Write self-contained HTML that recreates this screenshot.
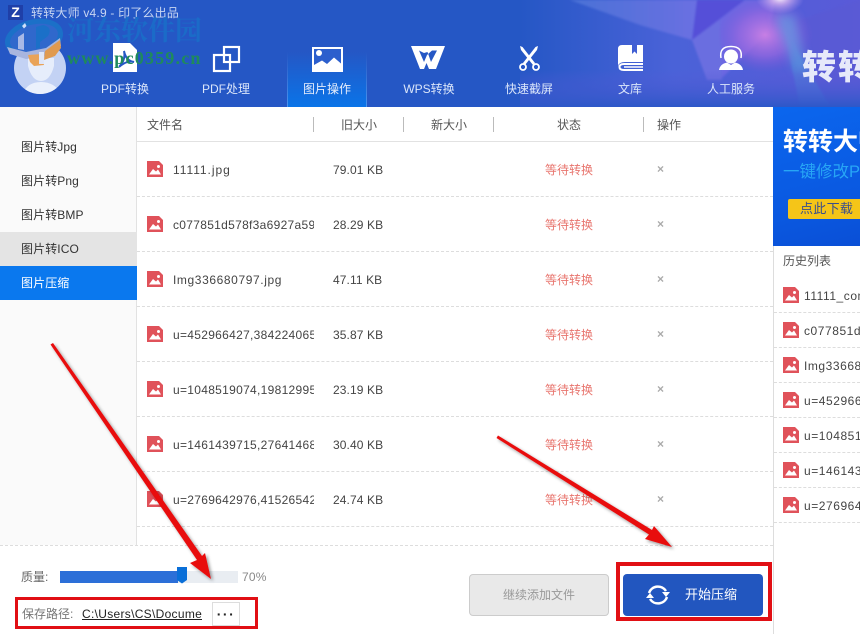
<!DOCTYPE html>
<html><head><meta charset="utf-8"><style>
*{box-sizing:border-box;margin:0;padding:0}
html,body{width:860px;height:634px;overflow:hidden;background:#fff}
body{position:relative;font-family:"Liberation Sans","Noto Sans CJK SC",sans-serif;font-size:12px;color:#444}
.a{position:absolute;white-space:nowrap}
.nav{position:absolute;top:81px;width:80px;text-align:center;color:#dbe6fa;font-size:12px;line-height:16px}
.side{position:absolute;left:21px;color:#333;line-height:16px;letter-spacing:.1px}
.hd{position:absolute;top:117px;color:#555;line-height:16px}
.sep{position:absolute;top:117px;width:1px;height:15px;background:#bbb}
.dash{position:absolute;left:137px;width:636px;border-top:1px dashed #ddd}
.nm{position:absolute;left:173px;width:141px;overflow:hidden;white-space:nowrap;color:#444;line-height:16px;letter-spacing:.3px}
.sz{position:absolute;left:333px;color:#444;line-height:16px;white-space:nowrap;letter-spacing:.1px}
.st{position:absolute;left:545px;color:#e8756e;line-height:16px;white-space:nowrap}
.x{position:absolute;left:657px;color:#aaa;font-size:12px;font-weight:bold;line-height:16px}
.ic{position:absolute;left:147px}
.hic{position:absolute;left:783px}
.hn{position:absolute;left:804px;color:#444;line-height:16px;white-space:nowrap;letter-spacing:.55px}
.hd2{position:absolute;left:774px;width:86px;border-top:1px dashed #ddd}
</style></head><body>
<svg width="0" height="0" style="position:absolute"><defs><symbol id="pic" viewBox="0 0 16 16"><path d="M0 0H12L16 4V16H0Z" fill="#e0525a"/><path d="M2 13.500L6 8L9 10.500L11 8.500L14 13.500Z" fill="#fff"/><circle cx="11.500" cy="5.500" r="1.500" fill="#fff"/></symbol></defs></svg>

<!-- header -->
<div class="a" style="left:0;top:0;width:860px;height:107px;background:#2557c5;overflow:hidden">
<svg width="860" height="107" style="position:absolute;left:0;top:0">
<defs>
<linearGradient id="g1" x1="0" y1="0" x2="1" y2="0"><stop offset="0" stop-color="#2557c5"/><stop offset=".45" stop-color="#4a62d8"/><stop offset="1" stop-color="#5a5ad8"/></linearGradient>
<linearGradient id="g3" x1="0" y1="0" x2="1" y2="0"><stop offset="0" stop-color="#4a72d6"/><stop offset="1" stop-color="#6a70e2"/></linearGradient>
<linearGradient id="gb" x1="0" y1="0" x2="0" y2="1"><stop offset="0" stop-color="#5a5ad8" stop-opacity="0"/><stop offset="1" stop-color="#2d58c8"/></linearGradient>
<radialGradient id="g2" cx="0.5" cy="0.5" r="0.5"><stop offset="0" stop-color="#c77fe4"/><stop offset=".55" stop-color="#9a68e0" stop-opacity=".7"/><stop offset="1" stop-color="#7a55d8" stop-opacity="0"/></radialGradient>
<radialGradient id="g4" cx="0.5" cy="0.5" r="0.5"><stop offset="0" stop-color="#fff4fb"/><stop offset=".4" stop-color="#e0b8f0" stop-opacity=".7"/><stop offset="1" stop-color="#c0a0f0" stop-opacity="0"/></radialGradient>
<linearGradient id="tab" x1="0" y1="0" x2="0" y2="1"><stop offset="0" stop-color="#2557c5"/><stop offset="1" stop-color="#0a74e8"/></linearGradient>
<linearGradient id="tabe" x1="0" y1="0" x2="0" y2="1"><stop offset="0" stop-color="#2557c5"/><stop offset="1" stop-color="#4a94ee"/></linearGradient>
<filter id="b1"><feGaussianBlur stdDeviation="1"/></filter>
<filter id="b3" x="-30%" y="-30%" width="160%" height="160%"><feGaussianBlur stdDeviation="5"/></filter>
</defs>
<rect x="520" y="0" width="340" height="107" fill="url(#g1)"/>
<g filter="url(#b1)">
<polygon points="570,0 640,0 697,0 692,40 640,25" fill="url(#g3)"/>
<polygon points="697,0 745,0 692,40" fill="#5450d8"/>
<polygon points="745,0 775,0 770,30 720,80 692,40" fill="#6c68e2"/>
<polygon points="692,40 720,20 722,80 707,80" fill="#6a6ee0"/>
<polygon points="783,25 830,107 800,107" fill="#4f7ad8" opacity=".75"/>
<polygon points="783,25 860,0 860,107 830,107" fill="#5a5ad4" opacity=".7"/>
</g>
<ellipse cx="765" cy="35" rx="48" ry="38" fill="url(#g2)"/>
<polygon points="775,15 795,15 806,70 795,70" fill="#5f9ae0" opacity=".7" filter="url(#b3)"/>
<ellipse cx="780" cy="-2" rx="24" ry="16" fill="url(#g4)"/>
<rect x="520" y="70" width="340" height="37" fill="url(#gb)"/>
<rect x="287" y="52" width="80" height="55" fill="url(#tab)"/>
<rect x="287" y="52" width="1" height="55" fill="url(#tabe)"/>
<rect x="366" y="52" width="1" height="55" fill="url(#tabe)"/>
</svg>
</div>

<!-- title -->
<div class="a" style="left:8px;top:5px;width:15px;height:15px;background:#1f3fa8;color:#fff;font:bold 14px/15px 'Liberation Sans';text-align:center">Z</div>
<div class="a" style="left:31px;top:5px;color:#c8d6f2;font-size:12px;line-height:16px;letter-spacing:.2px">转转大师 v4.9 - 印了么出品</div>

<!-- avatar & logo -->
<svg class="a" style="left:0;top:0" width="70" height="100" viewBox="0 0 70 100">
<defs><clipPath id="cp"><circle cx="40" cy="68" r="26"/></clipPath></defs>
<circle cx="40" cy="68" r="26" fill="#c3d2f4"/>
<g clip-path="url(#cp)">
<path d="M28 58H54V66Q50 81 41 81Q32 81 28 66Z" fill="#e6edfb"/>
<path d="M22 96Q26 82 41 82Q56 82 62 96Z" fill="#eaf0fc"/>
</g>
<ellipse cx="34" cy="38" rx="27" ry="16" transform="rotate(-14 34 38)" fill="#3068cc" stroke="#1b70c8" stroke-width="5"/>
<path d="M7 47L10 54L26 59L46 56L61 46L60 38L46 48L26 52Z" fill="#a8b5de"/>
<path d="M28 55L42 54L44 65L34 66L30 62Z" fill="#e9a358"/>
<path d="M45 51L60 40L61 48L55 56L44 60Z" fill="#e09a50"/>
<path d="M39 52H44V64H39Z" fill="#dfe6f8"/>
<path d="M18 37L24 33V50L18 49Z" fill="#a8b9e6"/>
<path d="M36 27L43 25Q53 27 48 36L40 42V48L36 49Z" fill="#1b70c8"/>
<path d="M25 23L26.500 26L24 28.500L22 26Z" fill="#cfe0fa"/>
</svg>

<!-- nav icons -->
<svg class="a" style="left:0;top:0" width="860" height="107">
<path d="M113 43H130L137 50V72H113Z" fill="#fff"/>
<path d="M124 51Q126 60 119 67Q127 60 134 62Q126 61 124 51Z" fill="none" stroke="#2557c5" stroke-width="2"/>
<g fill="none" stroke="#fff" stroke-width="2.200"><rect x="214" y="55" width="16" height="16"/><rect x="224" y="47" width="15" height="15"/></g>
<rect x="312" y="47" width="31" height="25" fill="#fff"/>
<rect x="314" y="49" width="27" height="14" fill="#2c5fcd"/>
<circle cx="319" cy="53" r="3" fill="#fff"/>
<path d="M314 70V64L322 59L327 62.500L334 56L341 62V70Z" fill="#fff"/>
<path d="M314 63L322 58.500L327 62L334 55.500L341 61.500V63.500L334 57.500L327 64L322 60.500L314 65Z" fill="#2c5fcd"/>
<path d="M411 46H445L436 69H429L426.500 63L424 69H420Z" fill="#fff"/>
<path d="M419 50.500L424 62L427 55L432 50.500H437L431 62L427.500 52L424 53Z" fill="#2557c5"/>
<g fill="#fff"><path d="M520 46L522.500 47L535 63L533 65L521 50Z"/><path d="M538 46L535.500 47L523 63L525 65L537 50Z"/></g>
<g fill="none" stroke="#fff" stroke-width="1.800"><circle cx="523" cy="67" r="3"/><circle cx="536" cy="67" r="3"/></g>
<path d="M622 45H632V54L634.500 51.500L637 54V45H643V62H625Q619 62 618 66V49Q618 45 622 45Z" fill="#fff"/>
<path d="M643 64H624Q619.500 64 619.500 67Q619.500 70 624 70H643" fill="none" stroke="#fff" stroke-width="2"/>
<path d="M624 67H643" stroke="#fff" stroke-width="1.500"/>
<circle cx="731" cy="56.500" r="7" fill="#fff"/>
<path d="M721 58Q719 46.500 731 46.500Q743 46.500 741 58" fill="none" stroke="#fff" stroke-width="1.500"/>
<path d="M719 70Q720 64 727 62.500L731 65L735 62.500Q742 64 743 70Z" fill="#fff"/>
</svg>
<div class="nav" style="left:85px">PDF转换</div>
<div class="nav" style="left:186px">PDF处理</div>
<div class="nav" style="left:287px;color:#e6eefc">图片操作</div>
<div class="nav" style="left:389px">WPS转换</div>
<div class="nav" style="left:489px">快速截屏</div>
<div class="nav" style="left:590px">文库</div>
<div class="nav" style="left:691px">人工服务</div>
<div class="a" style="left:802px;top:43px;color:#e6e9fa;font:900 34px/44px 'Noto Sans CJK SC',sans-serif;letter-spacing:2px">转转</div>

<!-- watermark -->
<div class="a" style="left:67px;top:14px;color:#1b6bc8;font:bold 27px/30px 'Noto Serif CJK SC',serif">河东软件园</div>
<div class="a" style="left:67px;top:48px;color:#1f8a5c;font:bold 18px/20px 'Liberation Serif',serif;letter-spacing:1.200px">www.pc0359.cn</div>

<!-- sidebar -->
<div class="a" style="left:0;top:107px;width:137px;height:438px;background:#fafafa;border-right:1px solid #e2e2e2"></div>
<div class="a" style="left:0;top:232px;width:137px;height:34px;background:#e4e4e4"></div>
<div class="a" style="left:0;top:266px;width:137px;height:34px;background:#0a78ee"></div>
<div class="side" style="top:138.500px">图片转Jpg</div>
<div class="side" style="top:172.500px">图片转Png</div>
<div class="side" style="top:206.500px">图片转BMP</div>
<div class="side" style="top:240.500px">图片转ICO</div>
<div class="side" style="top:274.500px;color:#fff">图片压缩</div>

<!-- table head -->
<div class="hd" style="left:147px">文件名</div>
<div class="sep" style="left:313px"></div>
<div class="hd" style="left:341px">旧大小</div>
<div class="sep" style="left:403px"></div>
<div class="hd" style="left:431px">新大小</div>
<div class="sep" style="left:493px"></div>
<div class="hd" style="left:557px">状态</div>
<div class="sep" style="left:643px"></div>
<div class="hd" style="left:657px">操作</div>
<div class="a" style="left:137px;top:141px;width:636px;height:1px;background:#e2e2e2"></div>

<!-- rows -->
<svg class="ic" style="top:161px" width="16" height="16"><use href="#pic"/></svg>
<div class="nm" style="top:162px;letter-spacing:.95px">11111.jpg</div><div class="sz" style="top:162px">79.01 KB</div><div class="st" style="top:162px">等待转换</div><div class="x" style="top:161px">×</div>
<div class="dash" style="top:196px"></div>
<svg class="ic" style="top:216px" width="16" height="16"><use href="#pic"/></svg>
<div class="nm" style="top:217px">c077851d578f3a6927a59f</div><div class="sz" style="top:217px">28.29 KB</div><div class="st" style="top:217px">等待转换</div><div class="x" style="top:216px">×</div>
<div class="dash" style="top:251px"></div>
<svg class="ic" style="top:271px" width="16" height="16"><use href="#pic"/></svg>
<div class="nm" style="top:272px;letter-spacing:.6px">Img336680797.jpg</div><div class="sz" style="top:272px">47.11 KB</div><div class="st" style="top:272px">等待转换</div><div class="x" style="top:271px">×</div>
<div class="dash" style="top:306px"></div>
<svg class="ic" style="top:326px" width="16" height="16"><use href="#pic"/></svg>
<div class="nm" style="top:327px">u=452966427,384224065</div><div class="sz" style="top:327px">35.87 KB</div><div class="st" style="top:327px">等待转换</div><div class="x" style="top:326px">×</div>
<div class="dash" style="top:361px"></div>
<svg class="ic" style="top:381px" width="16" height="16"><use href="#pic"/></svg>
<div class="nm" style="top:382px">u=1048519074,19812995</div><div class="sz" style="top:382px">23.19 KB</div><div class="st" style="top:382px">等待转换</div><div class="x" style="top:381px">×</div>
<div class="dash" style="top:416px"></div>
<svg class="ic" style="top:436px" width="16" height="16"><use href="#pic"/></svg>
<div class="nm" style="top:437px">u=1461439715,27641468</div><div class="sz" style="top:437px">30.40 KB</div><div class="st" style="top:437px">等待转换</div><div class="x" style="top:436px">×</div>
<div class="dash" style="top:471px"></div>
<svg class="ic" style="top:491px" width="16" height="16"><use href="#pic"/></svg>
<div class="nm" style="top:492px">u=2769642976,41526542</div><div class="sz" style="top:492px">24.74 KB</div><div class="st" style="top:492px">等待转换</div><div class="x" style="top:491px">×</div>
<div class="dash" style="top:526px"></div>
<div class="a" style="left:0;top:545px;width:773px;border-top:1px dashed #ddd"></div>

<!-- right panel -->
<div class="a" style="left:773px;top:107px;width:1px;height:527px;background:#ddd"></div>
<div class="a" style="left:773px;top:107px;width:87px;height:139px;background:linear-gradient(165deg,#0b66ee,#0a58e0 70%,#0a4fd6);overflow:hidden">
<div class="a" style="left:10px;top:16px;color:#fff;font:bold 25px/34px 'Noto Sans CJK SC',sans-serif">转转大师</div>
<div class="a" style="left:10px;top:53px;color:#27a6f5;font-size:16.500px;line-height:24px">一键修改PDF</div>
<div class="a" style="left:15px;top:92px;width:90px;height:20px;background:#f5c518;border-radius:2px;color:#3a4e8c;font-size:13px;line-height:20px;padding-left:12px;letter-spacing:.3px">点此下载</div>
</div>
<div class="a" style="left:783px;top:253px;color:#555;line-height:16px">历史列表</div>
<svg class="hic" style="top:287px" width="16" height="16"><use href="#pic"/></svg><div class="hn" style="top:288px">11111_compress</div><div class="hd2" style="top:312px"></div>
<svg class="hic" style="top:322px" width="16" height="16"><use href="#pic"/></svg><div class="hn" style="top:323px">c077851d578f</div><div class="hd2" style="top:347px"></div>
<svg class="hic" style="top:357px" width="16" height="16"><use href="#pic"/></svg><div class="hn" style="top:358px">Img336680797</div><div class="hd2" style="top:382px"></div>
<svg class="hic" style="top:392px" width="16" height="16"><use href="#pic"/></svg><div class="hn" style="top:393px">u=452966427</div><div class="hd2" style="top:417px"></div>
<svg class="hic" style="top:427px" width="16" height="16"><use href="#pic"/></svg><div class="hn" style="top:428px">u=104851907</div><div class="hd2" style="top:452px"></div>
<svg class="hic" style="top:462px" width="16" height="16"><use href="#pic"/></svg><div class="hn" style="top:463px">u=146143971</div><div class="hd2" style="top:487px"></div>
<svg class="hic" style="top:497px" width="16" height="16"><use href="#pic"/></svg><div class="hn" style="top:498px">u=276964297</div><div class="hd2" style="top:522px"></div>

<!-- bottom -->
<div class="a" style="left:21px;top:569px;color:#666;line-height:16px">质量:</div>
<div class="a" style="left:60px;top:571px;width:178px;height:12px;background:#e9edf2"></div>
<div class="a" style="left:60px;top:571px;width:118px;height:12px;background:#2c6fd8"></div>
<svg class="a" style="left:177px;top:567px" width="10" height="17"><path d="M0 0H10V13L5 16.500L0 13Z" fill="#0a6fd8"/></svg>
<div class="a" style="left:242px;top:569px;color:#888;line-height:16px;letter-spacing:.2px">70%</div>
<div class="a" style="left:15px;top:597px;width:243px;height:32px;border:3px solid #e10f14"></div>
<div class="a" style="left:22px;top:606px;color:#777;line-height:16px">保存路径:</div>
<div class="a" style="left:82px;top:606px;width:120px;overflow:hidden;color:#222;line-height:16px;text-decoration:underline;letter-spacing:.3px">C:\Users\CS\Documents</div>
<div class="a" style="left:212px;top:602px;width:28px;height:24px;border:1px solid #ddd;background:#fff;color:#222;font:bold 14px/22px 'Liberation Sans';text-align:center;letter-spacing:1.500px">···</div>

<div class="a" style="left:469px;top:574px;width:140px;height:42px;background:#e9e9e9;border:1px solid #ccc;border-radius:4px;color:#999;line-height:40px;text-align:center">继续添加文件</div>
<div class="a" style="left:616px;top:562px;width:156px;height:59px;border:4px solid #e10f14"></div>
<div class="a" style="left:623px;top:574px;width:140px;height:42px;background:#2256bf;border-radius:4px;color:#fff;font-size:13px;line-height:42px;padding-left:62px">开始压缩</div>
<svg class="a" style="left:645px;top:582px" width="26" height="26" viewBox="0 0 26 26"><g fill="none" stroke="#fff" stroke-width="2.500"><path d="M4 11A9.500 9.500 0 0 1 21 9"/><path d="M22 15A9.500 9.500 0 0 1 5 17"/></g><path d="M17 10H25L21 15Z" fill="#fff"/><path d="M1 16H9L5 11Z" fill="#fff"/></svg>

<!-- arrows -->
<svg class="a" style="left:0;top:0" width="860" height="634">
<defs><filter id="sh" x="-20%" y="-20%" width="140%" height="140%"><feDropShadow dx="2" dy="2" stdDeviation="1.500" flood-color="#000" flood-opacity=".4"/></filter></defs>
<g fill="#e8090e" filter="url(#sh)">
<path d="M50.500 344.500L53 343L202 556L205 553L211 579L190 563L197 560Z"/>
<path d="M496.500 438L498 435.500L652 530L654 526L672 547L645 539L649 534.500Z"/>
</g></svg>
</body></html>
